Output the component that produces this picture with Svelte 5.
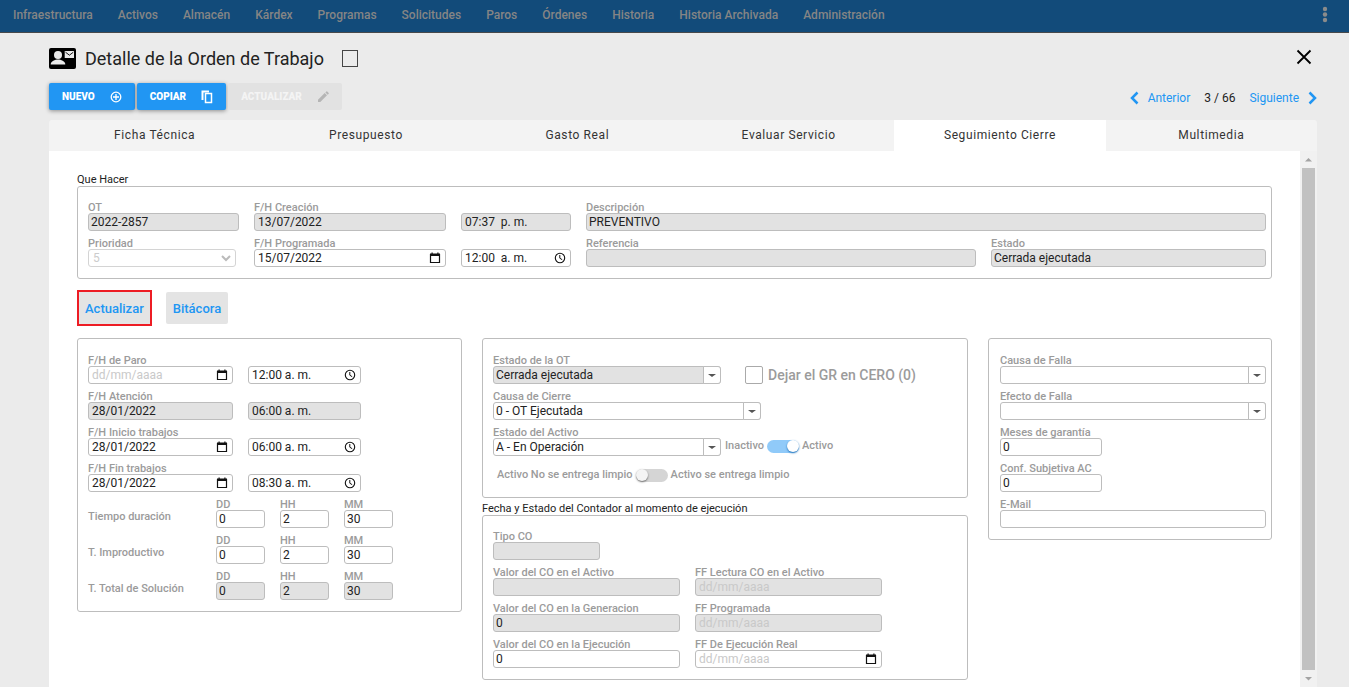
<script>
  const menu = [
    "Infraestructura",
    "Activos",
    "Almacén",
    "Kárdex",
    "Programas",
    "Solicitudes",
    "Paros",
    "Órdenes",
    "Historia",
    "Historia Archivada",
    "Administración",
  ];

  const tabs = [
    "Ficha Técnica",
    "Presupuesto",
    "Gasto Real",
    "Evaluar Servicio",
    "Seguimiento Cierre",
    "Multimedia",
  ];
  let activeTab = $state("Seguimiento Cierre");

  /* date + time pairs of the first box */
  const fechas = [
    { label: "F/H de Paro", date: "", time: "12:00 a. m." },
    { label: "F/H Atención", date: "28/01/2022", time: "06:00 a. m.", disabled: true },
    { label: "F/H Inicio trabajos", date: "28/01/2022", time: "06:00 a. m." },
    { label: "F/H Fin trabajos", date: "28/01/2022", time: "08:30 a. m." },
  ];

  const tiempos = [
    { label: "Tiempo duración", disabled: false },
    { label: "T. Improductivo", disabled: false },
    { label: "T. Total de Solución", disabled: true },
  ];

  let activo = $state(true);
  let limpio = $state(false);
  let grCero = $state(false);
</script>

{#snippet text(label, value = "", disabled = false, size = "")}
  <label class="field {size}">
    <span class="caption">{label}</span>
    <input type="text" {value} {disabled} />
  </label>
{/snippet}

{#snippet date(label, value = "", disabled = false)}
  <label class="field">
    <span class="caption">{label}</span>
    <span class="stack">
      <input class="picker" type="text" placeholder="dd/mm/aaaa" {value} {disabled} />
      {#if !disabled}
        <svg viewBox="0 0 12 12" width="12" height="12">
          <path d="M1.500 2.500h9v8h-9z" fill="none" stroke="#111" stroke-width="1.200" />
          <path d="M1 1.500h10v2.500H1zM2.500 .5h1.200v1H2.500zM8.300 .5h1.200v1H8.300z" fill="#111" />
        </svg>
      {/if}
    </span>
  </label>
{/snippet}

{#snippet time(name, value, disabled = false)}
  <span class="stack">
    <input class="picker" type="text" aria-label={name} {value} {disabled} />
    {#if !disabled}
      <svg viewBox="0 0 12 12" width="12" height="12">
        <circle cx="6" cy="6" r="4.700" fill="none" stroke="#111" stroke-width="1.100" />
        <path d="M5.800 3v3.200l2.400 1.500" fill="none" stroke="#111" stroke-width="1" />
      </svg>
    {/if}
  </span>
{/snippet}

{#snippet combo(label, value = "", disabled = false, size = "")}
  <label class="field {size}">
    <span class="caption">{label}</span>
    <span class="stack">
      <select {disabled}><option>{value}</option></select>
      <span class="caret"></span>
    </span>
  </label>
{/snippet}

<div class="page">
  <nav>
    {#each menu as item}
      <a href="#{item}">{item}</a>
    {/each}
    <button class="kebab" aria-label="Más opciones">
      <svg viewBox="0 0 6 18" width="6" height="18" fill="#8b8b8b">
        <circle cx="3" cy="3" r="2.200" /><circle cx="3" cy="8.500" r="2.200" /><circle cx="3" cy="14" r="2.200" />
      </svg>
    </button>
  </nav>

  <main>
    <header>
      <svg viewBox="0 0 27 21" width="27" height="21">
        <rect width="27" height="21" rx="2" fill="#000" />
        <circle cx="9" cy="7" r="4" fill="#ebebeb" />
        <path d="M1.700 16.500c0-3.300 4.500-5 7.300-5s7.300 1.700 7.300 5z" fill="#ebebeb" />
        <path d="M15.700 3h9.300v7h-9.300z" fill="#ebebeb" />
        <path d="M16.500 4.200l3.900 3 3.900-3" fill="none" stroke="#000" stroke-width=".9" />
      </svg>
      <h1>Detalle de la Orden de Trabajo</h1>
      <input class="check dark" type="checkbox" aria-label="Seleccionar orden" />
      <button class="close" aria-label="Cerrar">
        <svg viewBox="0 0 16 16" width="16" height="16">
          <path d="M1.500 1.500l13 13M14.500 1.500l-13 13" stroke="#000" stroke-width="1.800" />
        </svg>
      </button>
    </header>

    <div class="toolbar">
      <button class="action">
        NUEVO
        <svg viewBox="0 0 12 12" width="12" height="12" fill="none" stroke="#fff" stroke-width="1.300">
          <circle cx="6" cy="6" r="4.800" />
          <path d="M6 3v6M3 6h6" />
        </svg>
      </button>
      <button class="action">
        COPIAR
        <svg viewBox="0 0 12 14" width="12" height="14">
          <path d="M1.500 10V1.500h6.500" fill="none" stroke="#fff" stroke-width="2" />
          <path d="M4.500 3.500h6v9h-6z" fill="none" stroke="#fff" stroke-width="1.500" />
        </svg>
      </button>
      <button class="action" disabled>
        ACTUALIZAR
        <svg viewBox="0 0 12 12" width="12" height="12" fill="#b5b5b5">
          <path d="M1 11V8.700L7.700 2 10 4.300 3.300 11zM8.400 1.400l1-1q.4-.3.800 0l1.500 1.500q.3.400 0 .8l-1 1z" />
        </svg>
      </button>

      <div class="pager">
        <a href="#anterior">
          <svg viewBox="0 0 9 14" width="9" height="14"><path d="M7.500 1.500L2 7l5.500 5.500" /></svg>
          Anterior
        </a>
        <span>3 / 66</span>
        <a href="#siguiente">
          Siguiente
          <svg viewBox="0 0 9 14" width="9" height="14"><path d="M1.500 1.500L7 7l-5.500 5.500" /></svg>
        </a>
      </div>
    </div>

    <div class="tabs" role="tablist">
      {#each tabs as tab}
        <button
          role="tab"
          aria-selected={tab === activeTab}
          class:active={tab === activeTab}
          onclick={() => (activeTab = tab)}>{tab}</button
        >
      {/each}
    </div>

    <div class="panel">
      <div class="content">
        <h2>Que Hacer</h2>
        <section class="box que-hacer">
          {@render text("OT", "2022-2857", true)}
          {@render date("F/H Creación", "13/07/2022", true)}
          {@render time("Hora de creación", "07:37  p. m.", true)}
          {@render text("Descripción", "PREVENTIVO", true, "span2")}
          <label class="field prioridad">
            <span class="caption">Prioridad</span>
            <span class="stack">
              <select disabled><option>5</option></select>
              <svg viewBox="0 0 10 8" width="10" height="8">
                <path d="M1 2l4 4 4-4" fill="none" stroke="#bbb" stroke-width="2" />
              </svg>
            </span>
          </label>
          {@render date("F/H Programada", "15/07/2022")}
          {@render time("Hora programada", "12:00  a. m.")}
          {@render text("Referencia", "", true)}
          {@render text("Estado", "Cerrada ejecutada", true)}
        </section>

        <div class="commands">
          <button class="marked">Actualizar</button>
          <button>Bitácora</button>
        </div>

        <div class="columns">
          <section class="box">
            {#each fechas as f}
              <div class="fecha">
                {@render date(f.label, f.date, f.disabled)}
                {@render time(`Hora ${f.label}`, f.time, f.disabled)}
              </div>
            {/each}
            {#each tiempos as t}
              <div class="tiempo">
                <span class="row-name">{t.label}</span>
                {@render text("DD", "0", t.disabled)}
                {@render text("HH", "2", t.disabled)}
                {@render text("MM", "30", t.disabled)}
              </div>
            {/each}
          </section>

          <div>
            <section class="box">
              <div class="line">
                {@render combo("Estado de la OT", "Cerrada ejecutada", true, "half")}
                <label class="gr">
                  <input class="check" type="checkbox" bind:checked={grCero} />
                  Dejar el GR en CERO (0)
                </label>
              </div>
              {@render combo("Causa de Cierre", "0 - OT Ejecutada", false, "wide")}
              <div class="line">
                {@render combo("Estado del Activo", "A - En Operación", false, "half")}
                <label class="toggle">
                  Inactivo
                  <input type="checkbox" role="switch" bind:checked={activo} />
                  Activo
                </label>
              </div>
              <label class="toggle limpio">
                Activo No se entrega limpio
                <input type="checkbox" role="switch" bind:checked={limpio} />
                Activo se entrega limpio
              </label>
            </section>

            <h2 class="sub">Fecha y Estado del Contador al momento de ejecución</h2>
            <section class="box contador">
              {@render text("Tipo CO", "", true, "tipo")}
              {@render text("Valor del CO en el Activo", "", true)}
              {@render date("FF Lectura CO en el Activo", "", true)}
              {@render text("Valor del CO en la Generacion", "0", true)}
              {@render date("FF Programada", "", true)}
              {@render text("Valor del CO en la Ejecución", "0")}
              {@render date("FF De Ejecución Real")}
            </section>
          </div>

          <section class="box falla">
            {@render combo("Causa de Falla")}
            {@render combo("Efecto de Falla")}
            {@render text("Meses de garantía", "0", false, "short")}
            {@render text("Conf. Subjetiva AC", "0", false, "short")}
            {@render text("E-Mail")}
          </section>
        </div>
      </div>

      <div class="scrollbar" aria-hidden="true">
        <svg viewBox="0 0 17 17" width="17" height="17"><path d="M5 10.500h7L8.500 7z" fill="#a3a3a3" /></svg>
        <div class="thumb"></div>
        <svg viewBox="0 0 17 17" width="17" height="17"><path d="M5 7h7l-3.500 3.500z" fill="#a3a3a3" /></svg>
      </div>
    </div>
  </main>
</div>

<style>
  * {
    box-sizing: border-box;
  }
  button,
  input,
  select {
    font-family: inherit;
    margin: 0;
  }
  button {
    border: 0;
    padding: 0;
    background: none;
    cursor: pointer;
  }
  a {
    text-decoration: none;
  }

  .page {
    height: 100vh;
    display: flex;
    flex-direction: column;
    overflow: hidden;
    background: #ebebeb;
    font-family: Roboto, "Liberation Sans", sans-serif;
    font-size: 12px;
    color: #222;
  }

  nav {
    display: flex;
    gap: 25px;
    height: 33px;
    padding: 0 21px 3px 13px;
    align-items: center;
    background: #124b7a;
    border-bottom: 1px solid #47494b;
  }
  nav a {
    color: #858585;
    font-size: 12px;
    font-weight: 500;
  }
  .kebab {
    margin-left: auto;
    height: 18px;
  }

  main {
    flex: 1;
    min-height: 0;
    display: flex;
    flex-direction: column;
    padding: 0 32px 0 49px;
  }

  header {
    display: flex;
    align-items: center;
    height: 50px;
  }
  h1 {
    margin: 0 18px 0 9px;
    font-size: 18px;
    font-weight: 400;
    color: #222;
  }
  .close {
    margin-left: auto;
    margin-right: 5px;
    height: 18px;
  }

  .check {
    appearance: none;
    width: 18px;
    height: 18px;
    border: 1px solid #aaa;
    border-radius: 2px;
    background: #fff;
  }
  .check:checked {
    background: #2196f3;
  }
  .check.dark {
    width: 16px;
    height: 17px;
    border-color: #444;
    border-radius: 0;
    background: none;
  }

  .toolbar {
    display: flex;
    gap: 2px;
    height: 37px;
    align-items: flex-start;
  }
  .action {
    display: flex;
    align-items: center;
    gap: 15px;
    height: 27px;
    padding: 0 13px;
    border-radius: 2px;
    background: #2196f3;
    color: #fff;
    font-size: 10px;
    font-weight: 900;
    box-shadow: 0 1px 4px rgba(0, 0, 0, 0.4);
  }
  .action:disabled {
    background: #e2e2e2;
    color: #f4f4f4;
    box-shadow: none;
  }

  .pager {
    display: flex;
    gap: 14px;
    height: 30px;
    margin-left: auto;
    align-items: center;
    font-size: 12px;
  }
  .pager a {
    display: flex;
    gap: 9px;
    align-items: center;
    color: #2196f3;
  }
  .pager path {
    fill: none;
    stroke: #2196f3;
    stroke-width: 2.5;
  }

  .tabs {
    display: flex;
    height: 31px;
    border-radius: 3px 3px 0 0;
    overflow: hidden;
    background: #f3f3f3;
  }
  .tabs button {
    flex: 1;
    padding-bottom: 2px;
    font-size: 12px;
    letter-spacing: 0.05em;
    color: #333;
  }
  .tabs .active {
    background: #fff;
  }

  .panel {
    flex: 1;
    min-height: 0;
    display: flex;
    background: #fff;
  }
  .content {
    flex: 1;
    padding: 22px 28px 7px;
    overflow: hidden;
  }
  .scrollbar {
    width: 17px;
    display: flex;
    flex-direction: column;
    background: #f1f1f1;
  }
  .thumb {
    flex: 1;
    margin: 0 2px;
    background: #c1c1c1;
  }

  h2 {
    margin: 0;
    font-size: 11px;
    line-height: 13px;
    font-weight: 400;
    color: #222;
  }
  h2.sub {
    padding-top: 4px;
  }

  /* a field is 28px tall, so rows repeat every 36px */
  .box {
    display: flex;
    flex-direction: column;
    gap: 8px;
    padding: 17px 5px 11px 10px;
    border: 1px solid #bdbdbd;
    border-radius: 3px;
  }
  .que-hacer {
    display: grid;
    grid-template-columns: 151fr 192fr 110fr 390fr 275fr;
    gap: 8px 15px;
    padding-top: 16px;
    align-items: end;
  }
  .span2 {
    grid-column: span 2;
  }
  .prioridad {
    width: 98%;
  }

  .field {
    display: flex;
    flex-direction: column;
    min-width: 0;
  }
  .caption,
  .row-name,
  .toggle {
    font-size: 11px;
    line-height: 10px;
    font-weight: 500;
    color: #9b9b9b;
    white-space: nowrap;
  }

  .field input,
  .stack input,
  select {
    width: 100%;
    height: 18px;
    padding: 0 2px;
    border: 1px solid #bdbdbd;
    border-radius: 3px;
    background: #fff;
    font-size: 12px;
    line-height: 16px;
    color: #222;
  }
  .stack .picker {
    padding: 0 3px;
    white-space: pre;
  }
  select {
    appearance: none;
  }
  .field input:disabled,
  .stack input:disabled,
  select:disabled {
    background: #e2e2e2;
    opacity: 1;
  }
  input::placeholder {
    color: #c9c9c9;
  }

  /* control and its icon share one grid cell */
  .stack {
    display: grid;
    align-items: center;
  }
  .stack > * {
    grid-area: 1 / 1;
  }
  .stack svg {
    justify-self: end;
    margin-right: 5px;
    pointer-events: none;
  }
  .caret {
    justify-self: end;
    display: grid;
    place-items: center;
    width: 18px;
    height: 18px;
    border: 1px solid #bdbdbd;
    border-radius: 0 3px 3px 0;
    background: #fff;
    pointer-events: none;
  }
  .caret::before {
    content: "";
    border: 4px solid transparent;
    border-top: 3px solid #555;
    border-bottom: 0;
  }
  .prioridad select:disabled {
    padding: 0 4px;
    background: #fff;
    border-color: #d4d4d4;
    color: #ccc;
  }

  .commands {
    display: flex;
    gap: 14px;
    align-items: center;
    padding: 11px 0 12px;
  }
  .commands button {
    height: 32px;
    padding: 0 7px;
    border-radius: 2px;
    background: #e4e4e4;
    color: #2196f3;
    font-size: 13px;
    font-weight: 500;
  }
  .commands .marked {
    height: 36px;
    padding: 0 6px;
    border: 2px solid #ed1c24;
    border-radius: 0;
  }

  .columns {
    display: grid;
    grid-template-columns: 385fr 486fr 284fr;
    gap: 20px;
    align-items: start;
  }

  .fecha {
    display: grid;
    grid-template-columns: 145px 113px;
    gap: 15px;
    align-items: end;
  }
  .tiempo {
    display: grid;
    grid-template-columns: 113px repeat(3, 49px);
    gap: 15px;
    align-items: center;
  }
  .row-name {
    padding-top: 6px;
  }

  .line {
    display: flex;
    align-items: flex-end;
  }
  .half {
    width: 228px;
  }
  .wide {
    width: 268px;
  }
  .short {
    width: 102px;
  }
  .gr {
    display: flex;
    gap: 5px;
    align-items: center;
    margin-left: 24px;
    font-size: 14px;
    line-height: 18px;
    font-weight: 500;
    color: #9b9b9b;
  }

  .toggle {
    display: flex;
    gap: 3px;
    align-items: center;
    height: 20px;
    margin-left: 4px;
  }
  .toggle input {
    appearance: none;
    display: flex;
    align-items: center;
    width: 32px;
    height: 13px;
    border-radius: 7px;
    background: #d5d5d5;
  }
  .toggle input::before {
    content: "";
    width: 12px;
    height: 12px;
    border-radius: 50%;
    background: #f4f4f4;
    box-shadow: 0 1px 2px rgba(0, 0, 0, 0.5);
  }
  .toggle input:checked {
    justify-content: flex-end;
    background: #90caf9;
  }
  .toggle input:checked::before {
    background: #fff;
    box-shadow: 0 1px 2px #1e70b8;
  }
  .limpio {
    height: 22px;
  }

  .contador {
    display: grid;
    grid-template-columns: 187px 187px;
    gap: 8px 15px;
    padding-top: 16px;
  }
  .tipo {
    grid-column: span 2;
    width: 107px;
  }
  .falla {
    padding-left: 11px;
  }
</style>
